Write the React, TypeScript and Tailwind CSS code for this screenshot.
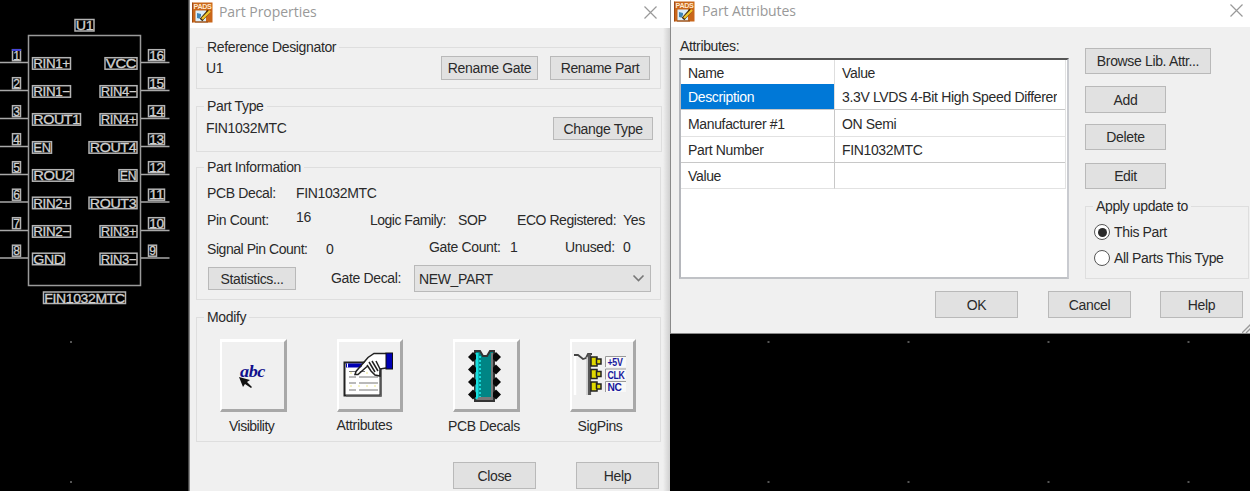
import type { ReactNode } from "react";

const LEFT_PINS = [
  { n: "1", name: "RIN1+", w: 38, y: 62.5 },
  { n: "2", name: "RIN1−", w: 38, y: 90.5 },
  { n: "3", name: "ROUT1", w: 48, y: 118.5 },
  { n: "4", name: "EN", w: 19, y: 146.5 },
  { n: "5", name: "ROU2", w: 41, y: 174.5 },
  { n: "6", name: "RIN2+", w: 38, y: 202 },
  { n: "7", name: "RIN2−", w: 38, y: 230.5 },
  { n: "8", name: "GND", w: 32, y: 258 },
];

const RIGHT_PINS = [
  { n: "16", name: "VCC", w: 32, y: 62.5 },
  { n: "15", name: "RIN4−", w: 37, y: 90.5 },
  { n: "14", name: "RIN4+", w: 37, y: 118.5 },
  { n: "13", name: "ROUT4", w: 48, y: 146.5 },
  { n: "12", name: "EN", w: 18, y: 174.5 },
  { n: "11", name: "ROUT3", w: 48, y: 202 },
  { n: "10", name: "RIN3+", w: 37, y: 230.5 },
  { n: "9", name: "RIN3−", w: 37, y: 258 },
];

function BoxedText({ x, y, w, h = 11.5, children }: { x: number; y: number; w: number; h?: number; children: string }) {
  return (
    <g>
      <rect x={x} y={y} width={w} height={h} fill="none" stroke="#b4b4b4" strokeWidth="1.500" />
      <text x={x + 0.8} y={y + h - 1} textLength={w - 1.6} lengthAdjust="spacingAndGlyphs" fontSize="13" fill="#d0d0d0" stroke="#d0d0d0" strokeWidth="0.300">
        {children}
      </text>
    </g>
  );
}

function Schematic() {
  return (
    <svg width="188" height="491" viewBox="0 0 188 491" className="block shrink-0 font-['Liberation_Sans',sans-serif]">
      <BoxedText x={75} y={19.5} w={19}>U1</BoxedText>
      <rect x="28.5" y="35.5" width="112" height="250" fill="none" stroke="#9a9a9a" strokeWidth="1.5" />
      {LEFT_PINS.map((p) => (
        <g key={p.n}>
          <path d={`M0 ${p.y}H28`} stroke="#a8a8a8" strokeWidth="1.5" />
          <BoxedText x={12.5} y={p.y - 12.8} w={8} h={11}>{p.n}</BoxedText>
          <BoxedText x={32.5} y={p.y - 4.8} w={p.w}>{p.name}</BoxedText>
        </g>
      ))}
      <path d="M12 50h9" stroke="#3b3be0" strokeWidth="1.8" />
      {RIGHT_PINS.map((p) => (
        <g key={p.n}>
          <path d={`M141 ${p.y}H169.500`} stroke="#a8a8a8" strokeWidth="1.5" />
          <BoxedText x={148.5} y={p.y - 12.8} w={p.n.length > 1 ? 16 : 8} h={11}>{p.n}</BoxedText>
          <BoxedText x={137 - p.w} y={p.y - 4.8} w={p.w}>{p.name}</BoxedText>
        </g>
      ))}
      <BoxedText x={43.5} y={292} w={82}>FIN1032MTC</BoxedText>
      <rect x="70" y="341" width="2" height="2" fill="#555" />
      <rect x="70" y="481" width="2" height="2" fill="#555" />
    </svg>
  );
}

function AppIcon() {
  return (
    <svg width="21" height="21" viewBox="0 0 21 21" className="shrink-0">
      <rect x="0.5" y="0.500" width="20" height="20" fill="#c9661a" />
      <path d="M0.500 20.500V0.500" stroke="#a04b10" />
      <text x="1.500" y="7" fontSize="7.500" fontWeight="bold" textLength="18" lengthAdjust="spacingAndGlyphs" fill="#ffe9cf" className="font-['Liberation_Sans',sans-serif]">PADS</text>
      <path d="M3.500 8.500h10.500v11H3.500z" fill="#dbeefa" />
      <path d="M5 11l4 1v5l-4-1z" fill="#3f86b8" />
      <path d="M9 14h4v4H7z" fill="#fff" />
      <path d="M9 18l8-9" stroke="#3d2a10" strokeWidth="3.600" />
      <path d="M10 17l8-8" stroke="#f2c62c" strokeWidth="2.400" />
      <path d="M3 20h13" stroke="#8a4a1b" />
    </svg>
  );
}

function CloseIcon() {
  return (
    <svg width="15" height="15" viewBox="0 0 15 15" className="shrink-0">
      <path d="M1.500 1.500l12 12M13.500 1.500l-12 12" stroke="#999" strokeWidth="1.200" fill="none" />
    </svg>
  );
}

function Button({ className, children }: { className: string; children: ReactNode }) {
  return (
    <button className={`flex shrink-0 items-center justify-center whitespace-pre border-[1.500px] border-[#b9b9b9] bg-[#e1e1e1] leading-4 tracking-[-0.350px] ${className}`}>
      {children}
    </button>
  );
}

function Group({ title, className, children }: { title: string; className: string; children: ReactNode }) {
  return (
    <fieldset className={`min-w-0 shrink-0 border border-[#dedede] ${className}`}>
      <legend className="ml-[7px] h-4 px-[3px] leading-4">{title}</legend>
      {children}
    </fieldset>
  );
}

function Tool({ label, className, children }: { label: string; className: string; children: ReactNode }) {
  return (
    <div className="flex w-[116.5px] shrink-0 flex-col">
      <button className="flex h-[73px] w-[66.5px] items-center justify-center border-t-[3px] border-r-[3px] border-b-[3px] border-l-2 border-t-white border-r-[#a8a8a8] border-b-[#a8a8a8] border-l-white bg-[#f0f0f0]">
        {children}
      </button>
      <span className={`leading-4 whitespace-nowrap ${className}`}>{label}</span>
    </div>
  );
}

function VisibilityIcon() {
  return (
    <svg width="60" height="66" viewBox="2 0 60 66">
      <text x="19" y="34" fontSize="16" fontStyle="italic" fontWeight="bold" textLength="25" lengthAdjust="spacingAndGlyphs" fill="#10108c" className="font-['Liberation_Serif',serif]">abc</text>
      <path d="M18 34l11 3-3 2 5 5-1 1-6-4-2 3z" fill="#111" />
    </svg>
  );
}

function AttributesIcon() {
  return (
    <svg width="60" height="66" viewBox="1 0 60 66">
      <rect x="6.500" y="19.500" width="36" height="33" fill="#fff" stroke="#222" strokeWidth="2" />
      <path d="M43 21v32H8" stroke="#666" fill="none" strokeWidth="1.500" />
      <rect x="8" y="20.500" width="16" height="4" fill="#0000b4" />
      <path d="M9.500 20.500v4" stroke="#fff" />
      <path d="M11 28.500h7M21 28.500h6M11 34h7M21 34h19M11 40h7M21 40h19M11 47h7M21 47h19" stroke="#777" strokeWidth="1.200" />
      <path d="M12 30h28M12 43h28" stroke="#eee88a" strokeDasharray="2 6" />
      <path d="M18 31L30 15l6-5h12v15l-6 1-1 6-4-1-4-4-5-4-9 8z" fill="#fff" />
      <path d="M48 10.500H36l-6 4-12 14-1 3 3 0 9-8M29 22l4 6 4 4 5 1v-7M31 19l6 10M34 18l6 10M38 18l4 8 6-1" fill="none" stroke="#222" strokeWidth="1.500" />
      <rect x="48" y="10" width="6.500" height="16" fill="#0000b4" stroke="#111" strokeWidth="1" />
    </svg>
  );
}

function DecalIcon() {
  return (
    <svg width="60" height="66" viewBox="2 0 60 66">
      <path d="M21 8h5l3 5h4l3-5h4v50H21z" fill="#008585" stroke="#333" strokeWidth="2" />
      <path d="M23 10v46" stroke="#18e0e0" strokeWidth="3" />
      <path d="M26 13v43" stroke="#18d6d6" strokeWidth="2" strokeDasharray="2 2" />
      <path d="M22 57l3-3h12V10h2v47z" fill="#777" />
      {[14, 26.5, 39, 51.5].map((y) => (
        <g key={y} fill="#080808">
          <path d={`M14 ${y}l5-5 3 3v4l-3 3z`} />
          <path d={`M47 ${y}l-5-5-3 3v4l3 3z`} />
        </g>
      ))}
    </svg>
  );
}

function SigPinsIcon() {
  return (
    <svg width="60" height="66" viewBox="3 0 60 66" className="font-['Liberation_Sans',sans-serif]">
      <path d="M6 13v39" stroke="#fff" strokeWidth="2.500" />
      <path d="M5 12h4l5 4 3-1 2-4h4" fill="none" stroke="#444" strokeWidth="1.800" />
      <path d="M20.500 11v41" stroke="#555" strokeWidth="3.200" />
      <path d="M18 14v38" stroke="#bbb" />
      {[
        { y: 18, t: "+5V", w: 15 },
        { y: 30.5, t: "CLK", w: 17 },
        { y: 43, t: "NC", w: 14 },
      ].map(({ y, t, w }) => (
        <g key={t}>
          <path d={`M22 ${y - 4}h6v2h4v5h-4v2h-6z`} fill="#e0d800" stroke="#222" strokeWidth="1.500" />
          <path d={`M27.500 ${y - 3}v6`} stroke="#222" strokeWidth="1.500" />
          <rect x="36" y={y - 5} width="21" height="11" fill="#f8f8f8" />
          <path d={`M36.500 ${y + 6}v-10.500H57`} fill="none" stroke="#999" />
          <text x="38.500" y={y + 5} fontSize="10" fontWeight="bold" textLength={w} lengthAdjust="spacingAndGlyphs" fill="#17179c">{t}</text>
        </g>
      ))}
    </svg>
  );
}

function PropertiesDialog() {
  return (
    <section className="flex h-[491px] w-[481px] shrink-0 flex-col border-l border-[#8a8a8a] bg-[#f0f0f0]">
      <header className="flex h-7 shrink-0 items-start bg-white pt-[2px] pl-[2px]">
        <AppIcon />
        <h1 className="w-[430px] shrink-0 pl-[6px] font-['Open_Sans',sans-serif] text-[14px] leading-[20px] tracking-[-0.050px] text-[#999]">Part Properties</h1>
        <div className="pt-[3px]"><CloseIcon /></div>
      </header>
      <div className="flex flex-1">
        <div className="w-[473px] shrink-0 pt-[11px] pl-[6px]">
          <Group title="Reference Designator" className="h-[50px] w-[465px]">
            <div className="flex pl-[9px]">
              <span className="mt-[5px] w-[235px] leading-4">U1</span>
              <Button className="mt-px h-6 w-[97px]">Rename Gate</Button>
              <Button className="mt-px ml-3 h-6 w-[100px]">Rename Part</Button>
            </div>
          </Group>
          <Group title="Part Type" className="mt-[9px] h-[54px] w-[466px]">
            <div className="flex pl-[9px]">
              <span className="mt-[6px] w-[347px] leading-4">FIN1032MTC</span>
              <Button className="mt-[3px] h-[23px] w-[100px]">Change Type</Button>
            </div>
          </Group>
          <Group title="Part Information" className="mt-[7px] h-[141px] w-[465px]">
            <div className="flex h-7 pt-[10px] pl-[10px] leading-4">
              <span className="w-[89px]">PCB Decal:</span>
              <span>FIN1032MTC</span>
            </div>
            <div className="flex h-7 pt-[9px] pl-[10px] leading-4">
              <span className="w-[89px]">Pin Count:</span>
              <span className="-mt-[3px] w-[74px]">16</span>
              <span className="w-[88px] tracking-[-0.500px]">Logic Family:</span>
              <span className="w-[59px]">SOP</span>
              <span className="w-[106px] tracking-[-0.450px]">ECO Registered:</span>
              <span>Yes</span>
            </div>
            <div className="flex h-[34px] pt-[10px] pl-[10px] leading-4">
              <span className="w-[119px] tracking-[-0.450px]">Signal Pin Count:</span>
              <span className="w-[103px]">0</span>
              <span className="-mt-[2px] w-[81px]">Gate Count:</span>
              <span className="-mt-[2px] w-[55px]">1</span>
              <span className="-mt-[2px] w-[58px]">Unused:</span>
              <span className="-mt-[2px]">0</span>
            </div>
            <div className="flex pl-[11px] leading-4">
              <Button className="mt-[2px] h-[23px] w-[88px]">Statistics...</Button>
              <span className="mt-[5px] ml-[35px] w-[83px]">Gate Decal:</span>
              <div className="flex h-[27px] w-[237px] items-center justify-between border-[1.500px] border-[#b9b9b9] bg-[#e3e3e3] pr-[5px] pl-[4px]">
                <span>NEW_PART</span>
                <svg width="13" height="9" viewBox="0 0 13 9"><path d="M1.500 1.500l5 5 5-5" fill="none" stroke="#777" strokeWidth="1.600" /></svg>
              </div>
            </div>
          </Group>
          <Group title="Modify" className="mt-[9px] h-[133px] w-[465px]">
            <div className="flex w-[440px] pt-[14px] pl-[23px]">
              <Tool label="Visibility" className="mt-[6px] pl-[9px] tracking-[-0.500px]"><VisibilityIcon /></Tool>
              <Tool label="Attributes" className="mt-[5px]"><AttributesIcon /></Tool>
              <Tool label="PCB Decals" className="mt-[6px] -ml-[5px]"><DecalIcon /></Tool>
              <Tool label="SigPins" className="mt-[6px] pl-[8px]"><SigPinsIcon /></Tool>
            </div>
          </Group>
          <div className="mt-5 flex pl-[257px]">
            <Button className="h-[27px] w-[83px]">Close</Button>
            <Button className="ml-[40px] h-[27px] w-[83px]">Help</Button>
          </div>
        </div>
        <div className="flex-1 bg-linear-to-r from-[#f0f0f0] to-[#cfcfcf]" />
      </div>
    </section>
  );
}

const ATTRIBUTES = [
  { name: "Manufacturer #1", value: "ON Semi", row: "h-[27px] border-b-[#e2e2e2] pt-[6px]" },
  { name: "Part Number", value: "FIN1032MTC", row: "h-[26px] border-b-[#c8c8c8] pt-[5px]" },
  { name: "Value", value: "", row: "h-[26px] border-b-[#e2e2e2] pt-[5px]" },
];

function AttributeTable() {
  return (
    <div className="mt-[1px] h-[221px] w-[390px] border-2 border-t-[#555] border-r-[#c9cbd0] border-b-[#c0c2c6] border-l-[#b5b7bc] bg-white leading-4">
      <div className="w-[385px] border-r border-[#e2e2e2]">
        <div className="flex h-6">
          <span className="w-[154px] border-r border-[#dedede] pt-[5px] pl-[7px]">Name</span>
          <span className="pt-[5px] pl-[7px]">Value</span>
        </div>
        <div className="flex h-[26px] border-b border-[#c8c8c8]">
          <span className="w-[154px] border-r border-[#dedede] bg-[#0078d7] pt-[5px] pl-[7px] text-white">Description</span>
          <span className="overflow-hidden pt-[5px] pl-[7px] tracking-[-0.350px] whitespace-nowrap">3.3V LVDS 4-Bit High Speed Differer</span>
        </div>
        {ATTRIBUTES.map((a) => (
          <div key={a.name} className="flex">
            <span className={`w-[154px] border-r border-b border-r-[#c8c8c8] pl-[7px] ${a.row}`}>{a.name}</span>
            <span className={`flex-1 border-b pl-[7px] ${a.row}`}>{a.value}</span>
          </div>
        ))}
      </div>
    </div>
  );
}

function Radio({ checked, children }: { checked?: boolean; children: string }) {
  return (
    <label className="flex h-[26px] items-center gap-[4px]">
      <span className="flex size-4 items-center justify-center rounded-full border-[1.500px] border-[#555] bg-white">
        {checked && <span className="size-[9px] rounded-full bg-[#2b2b2b]" />}
      </span>
      <span className="leading-4">{children}</span>
    </label>
  );
}

function AttributesDialog() {
  return (
    <section className="flex h-[334px] w-[580px] shrink-0 flex-col border-b border-l border-[#8a8a8a] bg-[#f0f0f0]">
      <header className="flex h-[27px] shrink-0 items-start bg-white pt-px pl-[3px]">
        <AppIcon />
        <h1 className="w-[536px] shrink-0 pl-[7px] font-['Open_Sans',sans-serif] text-[14px] leading-[20px] tracking-[-0.100px] text-[#999]">Part Attributes</h1>
        <div className="-ml-[2px] pt-[2px]"><CloseIcon /></div>
      </header>
      <div className="flex h-[264px] pt-[11px] pl-[8px]">
        <div className="flex w-[406px] flex-col">
          <span className="h-[19px] pl-px leading-4">Attributes:</span>
          <AttributeTable />
        </div>
        <div className="flex flex-col pt-[10px]">
          <Button className="h-[26px] w-[126px]">Browse Lib. Attr...</Button>
          <Button className="mt-3 h-[27px] w-[81px]">Add</Button>
          <Button className="mt-[11px] h-[26px] w-[81px]">Delete</Button>
          <Button className="mt-[13px] h-[26px] w-[81px]">Edit</Button>
          <Group title="Apply update to" className="mt-[9px] h-[81px] w-[164px]">
            <div className="pt-[5px] pl-[8px]">
              <Radio checked>This Part</Radio>
              <Radio>All Parts This Type</Radio>
            </div>
          </Group>
        </div>
      </div>
      <div className="flex flex-1 pl-[264px]">
        <Button className="h-[27px] w-[83px]">OK</Button>
        <Button className="ml-[30px] h-[27px] w-[83px]">Cancel</Button>
        <Button className="ml-[29px] h-[27px] w-[83px]">Help</Button>
        <svg width="9" height="10" viewBox="0 0 9 10" className="-ml-px shrink-0 self-end">
          <path d="M0 10L9 1M4 10l5-5" stroke="#999" strokeWidth="1.300" />
        </svg>
      </div>
    </section>
  );
}

export default function App() {
  return (
    <main className="flex h-[491px] w-[1250px] overflow-hidden bg-black font-['Liberation_Sans',sans-serif] text-[14px] tracking-[-0.350px] text-[#2a2a2a]">
      <Schematic />
      <div className="w-px shrink-0 bg-[#444]" />
      <PropertiesDialog />
      <div className="flex flex-col">
        <AttributesDialog />
        <svg width="580" height="157" viewBox="0 0 580 157">
          {[98, 238, 378, 518].map((x) => (
            <g key={x} fill="#555">
              <rect x={x - 0.5} y="7" width="2" height="2" />
              <rect x={x - 0.5} y="147" width="2" height="2" />
            </g>
          ))}
        </svg>
      </div>
    </main>
  );
}
